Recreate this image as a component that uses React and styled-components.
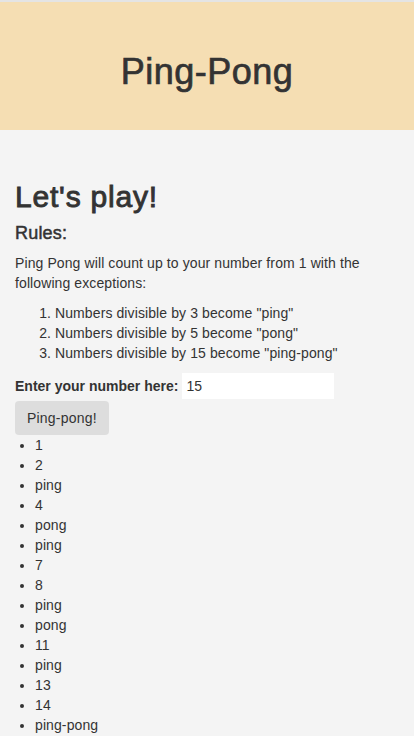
import React, { useState } from 'react';
import styled, { createGlobalStyle } from 'styled-components';

const GlobalStyle = createGlobalStyle`
  * {
    box-sizing: border-box;
  }
  body {
    margin: 0;
    background-color: #f4f4f4;
    font-family: "Liberation Sans", Arial, sans-serif;
    font-size: 14px;
    line-height: 20px;
    letter-spacing: 0.1px;
    color: #333;
  }
`;

const Header = styled.header`
  height: 130px;
  border-top: 2px solid #e4e4e4;
  background-color: #f5deb3;
  display: flex;
  align-items: center;
  justify-content: center;
`;

// headings use a medium weight; stroke thickens the regular face a little
const Title = styled.h1`
  margin: 0;
  padding-top: 12px;
  font-size: 36px;
  font-weight: 400;
  line-height: 40px;
  letter-spacing: 0.5px;
  -webkit-text-stroke: 0.7px #333;
`;

const Container = styled.main`
  padding: 30px 15px 0;
`;

const Heading = styled.h2`
  margin: 20px 0 10px;
  font-size: 30px;
  font-weight: 400;
  line-height: 33px;
  letter-spacing: 0.8px;
  -webkit-text-stroke: 0.9px #333;
`;

const SubHeading = styled.h4`
  margin: 0 0 10px;
  font-size: 18px;
  font-weight: 400;
  line-height: 20px;
  letter-spacing: 0.2px;
  -webkit-text-stroke: 0.5px #333;
`;

const Text = styled.p`
  margin: 0 0 10px;
`;

const RuleList = styled.ol`
  margin: 0 0 10px;
  padding-left: 40px;
`;

const Form = styled.form`
  display: flex;
  flex-direction: column;
  align-items: flex-start;
  gap: 2px;
`;

const Field = styled.div`
  display: flex;
  align-items: center;
  gap: 4px;
`;

const Label = styled.label`
  font-weight: 700;
  letter-spacing: 0;
`;

const Input = styled.input`
  width: 152px;
  height: 26px;
  border: none;
  padding: 0 4px;
  background: #fff;
  font-family: inherit;
  font-size: 14px;
  color: #333;
  outline: none;
`;

const Button = styled.button`
  height: 34px;
  padding: 6px 12px;
  border: none;
  border-radius: 4px;
  background-color: #ddd;
  font-family: inherit;
  font-size: 14px;
  line-height: 20px;
  letter-spacing: 0.2px;
  color: #333;
  cursor: pointer;
`;

const Results = styled.ul`
  margin: 0;
  padding-left: 20px;
`;

function pingPong(n) {
  const out = [];
  for (let i = 1; i <= n; i++) {
    if (i % 15 === 0) out.push('ping-pong');
    else if (i % 3 === 0) out.push('ping');
    else if (i % 5 === 0) out.push('pong');
    else out.push(String(i));
  }
  return out;
}

export default function App() {
  const [value, setValue] = useState('15');
  const [results, setResults] = useState(pingPong(15));

  const handleSubmit = (e) => {
    e.preventDefault();
    setResults(pingPong(parseInt(value, 10) || 0));
  };

  return (
    <>
      <GlobalStyle />
      <Header>
        <Title>Ping-Pong</Title>
      </Header>
      <Container>
        <Heading>Let's play!</Heading>
        <SubHeading>Rules:</SubHeading>
        <Text>Ping Pong will count up to your number from 1 with the following exceptions:</Text>
        <RuleList>
          <li>Numbers divisible by 3 become "ping"</li>
          <li>Numbers divisible by 5 become "pong"</li>
          <li>Numbers divisible by 15 become "ping-pong"</li>
        </RuleList>
        <Form onSubmit={handleSubmit}>
          <Field>
            <Label htmlFor="number">Enter your number here:</Label>
            <Input id="number" type="text" value={value} onChange={(e) => setValue(e.target.value)} />
          </Field>
          <Button type="submit">Ping-pong!</Button>
        </Form>
        <Results>
          {results.map((r, i) => (
            <li key={i}>{r}</li>
          ))}
        </Results>
      </Container>
    </>
  );
}
